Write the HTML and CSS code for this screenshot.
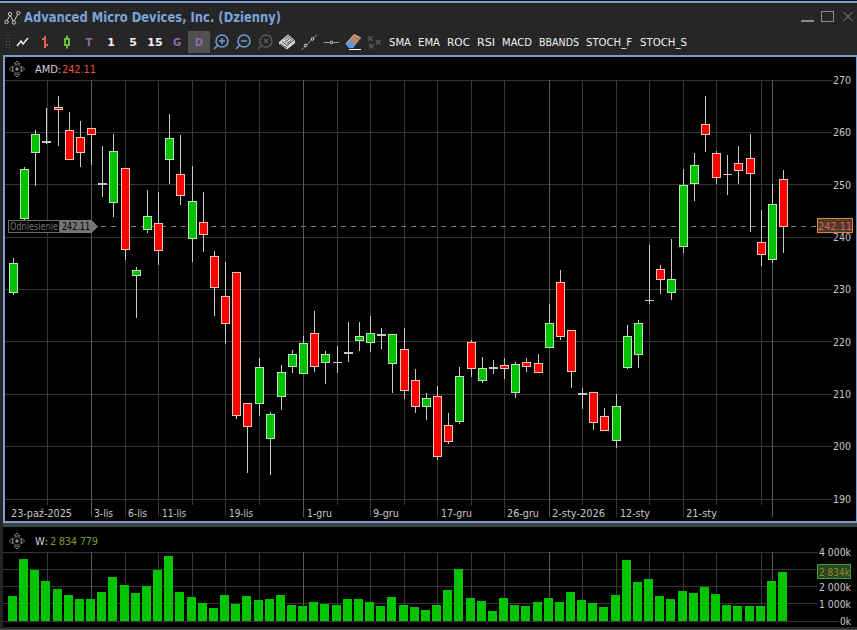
FILE: index.html
```html
<!DOCTYPE html>
<html lang="pl">

<head>
    <meta charset="utf-8">
    <title>Advanced Micro Devices, Inc. (Dzienny)</title>
    <meta name="viewport" content="width=device-width, initial-scale=1">
    <link rel="stylesheet" href="styles.css">
</head>

<body>
    <div class="strip"></div>
    <div class="titlebar">
        <svg class="logo" width="17" height="16" viewBox="0 0 17 16">
            <path d="M3 11 L6 5 L9.500 12 L14 4" />
            <circle cx="2.500" cy="12" r="1.700" />
            <circle cx="6" cy="4" r="1.700" />
            <circle cx="10" cy="12.500" r="1.700" />
            <circle cx="14.300" cy="3" r="1.700" />
        </svg>
        <svg class="title" width="260" height="20"><text x="0" y="14" textLength="257" lengthAdjust="spacingAndGlyphs">Advanced Micro Devices, Inc. (Dzienny)</text></svg>
        <svg class="controls" width="54" height="16" viewBox="0 0 54 16">
            <path class="thick" d="M1 13 H14" />
            <rect x="21.500" y="3.500" width="12" height="10" />
            <path d="M43.500 4 L52.500 13 M52.500 4 L43.500 13" />
        </svg>
    </div>
    <div class="toolbar">
        <div class="grip"></div>
        <div class="tool"><svg viewBox="0 0 22 22"><path class="white" d="M5 15 L9 10 L11 13 L16 7" /></svg></div>
        <div class="tool"><svg viewBox="0 0 22 22"><path class="pink" d="M11 5 V17 M8 8 H11 M11 14 H14" /></svg></div>
        <div class="tool"><svg viewBox="0 0 22 22"><path class="lime" d="M11 4.500 V8 M11 14 V17.500 M9 8 H13 V14 H9 Z" /></svg></div>
        <div class="tool letter purple">T</div>
        <div class="tool letter">1</div>
        <div class="tool letter">5</div>
        <div class="tool letter">15</div>
        <div class="tool letter purple">G</div>
        <div class="tool letter purple active">D</div>
        <div class="tool"><svg viewBox="0 0 22 22"><g class="blue"><circle cx="12" cy="10" r="6" /><path d="M7.500 14.500 L4 18 M9 10 H15 M12 7 V13" /></g></svg></div>
        <div class="tool"><svg viewBox="0 0 22 22"><g class="blue"><circle cx="12" cy="10" r="6" /><path d="M7.500 14.500 L4 18 M9 10 H15" /></g></svg></div>
        <div class="tool"><svg viewBox="0 0 22 22"><g class="off"><circle cx="12" cy="10" r="6" /><path d="M7.500 14.500 L4 18 M10 8 L14 12 M14 8 L10 12" /></g></svg></div>
        <div class="tool"><svg viewBox="0 0 22 22">
            <path d="M3 11 L12 3.500 L19 9.500 L19 12 L11 18.500 L3 13 Z" fill="#d8d8d8" />
            <path d="M8.500 8.500 L12 5.500 L16.500 9 M6 10.500 L11 14.500 L18 9 M9 11 L13 8 M11 12.500 L15 9.500 M4 13 L11 17" stroke="#444" fill="none" />
        </svg></div>
        <div class="tool"><svg viewBox="0 0 22 22"><path d="M3.500 19 L19 3.500" stroke="#8fa3b3" /><g class="knob"><circle cx="7.500" cy="14.500" r="1.300" /><circle cx="14.500" cy="8" r="1.300" /></g></svg></div>
        <div class="tool"><svg viewBox="0 0 22 22"><path d="M3.500 11.500 H19" stroke="#7fa0b8" /><g class="knob"><circle cx="11.500" cy="11.500" r="1.300" /></g></svg></div>
        <div class="tool"><svg viewBox="0 0 22 22">
            <path d="M4 13 L12 3.500 L19 7 L11 17 L7 17 Z" fill="#b98468" />
            <path d="M3.500 13 L7 9 L14 13 L11 17 L7 17 Z" fill="#5d97dc" />
            <path d="M4 13 L12 3.500 L19 7" stroke="#e8b090" fill="none" />
            <path d="M7 18.500 H19" stroke="#fff" />
        </svg></div>
        <div class="tool"><svg viewBox="0 0 22 22"><path class="off" d="M4 5.500 L8.500 10 M8.500 5.500 L4 10 M12 9 L16.500 13.500 M16.500 9 L12 13.500 M5 13 L9.500 17.500 M9.500 13 L5 17.500" /></svg></div>
        <div class="indicators">
            <svg width="310" height="22">
                <text x="3" y="15" textLength="22" lengthAdjust="spacingAndGlyphs">SMA</text>
                <text x="32" y="15" textLength="22" lengthAdjust="spacingAndGlyphs">EMA</text>
                <text x="61" y="15" textLength="23" lengthAdjust="spacingAndGlyphs">ROC</text>
                <text x="91" y="15" textLength="18" lengthAdjust="spacingAndGlyphs">RSI</text>
                <text x="116" y="15" textLength="30" lengthAdjust="spacingAndGlyphs">MACD</text>
                <text x="153" y="15" textLength="40" lengthAdjust="spacingAndGlyphs">BBANDS</text>
                <text x="200" y="15" textLength="46" lengthAdjust="spacingAndGlyphs">STOCH_F</text>
                <text x="254" y="15" textLength="47" lengthAdjust="spacingAndGlyphs">STOCH_S</text>
            </svg>
        </div>
    </div>

    <div class="pane price">
        <div class="legend">
            <svg class="compass" width="16" height="18" viewBox="0 0 16 18">
                <circle class="dot" cx="8" cy="9" r="1.800" />
                <path d="M5 4 L8 1 L11 4 Z M5 14 L8 17 L11 14 Z M3.500 6 L0.500 9 L3.500 12 Z M12.500 6 L15.500 9 L12.500 12 Z" />
                <path class="ring" d="M5 6 Q8 4 11 6 Q13 9 11 12 Q8 14 5 12 Q3 9 5 6" />
            </svg>
            <svg width="120" height="16"><text x="0" y="13" textLength="26">AMD:</text><text class="down" x="27" y="13" textLength="34">242.11</text></svg>
        </div>
        <svg id="candles" width="851" height="444" viewBox="5 77 851 444"></svg>
    </div>

    <div class="pane volume">
        <div class="legend">
            <svg class="compass" width="16" height="18" viewBox="0 0 16 18">
                <circle class="dot" cx="8" cy="9" r="1.800" />
                <path d="M5 4 L8 1 L11 4 Z M5 14 L8 17 L11 14 Z M3.500 6 L0.500 9 L3.500 12 Z M12.500 6 L15.500 9 L12.500 12 Z" />
                <path class="ring" d="M5 6 Q8 4 11 6 Q13 9 11 12 Q8 14 5 12 Q3 9 5 6" />
            </svg>
            <svg width="120" height="16"><text x="0" y="13" textLength="13">W:</text><text class="up" x="15" y="13" textLength="48">2 834 779</text></svg>
        </div>
        <svg id="volume" width="854" height="78" viewBox="3 549 854 78"></svg>
    </div>
    <div class="bottom"></div>
    <script src="chart.js"></script>
</body>

</html>
```
FILE: styles.css
```css
* {
    box-sizing: border-box;
}

body {
    margin: 0;
    width: 857px;
    height: 630px;
    overflow: hidden;
    background-color: #262626;
    font-family: 'DejaVu Sans Condensed', 'DejaVu Sans', sans-serif;
    font-size: 11px;
    color: #e6e6e6;
    display: flex;
    flex-direction: column;
}

svg {
    display: block;
    flex: none;
    fill: none;
}

text {
    fill: #f0f0f0;
}

.strip {
    height: 3px;
    background-color: #0a1430;
    border-bottom: 2px solid #7a9cc8;
}

/* title bar */
.titlebar {
    height: 28px;
    display: flex;
    padding: 4px 3px 0 4px;
}

.logo {
    margin-top: 3px;
    stroke: #c8c8c8;
}

.logo circle {
    fill: #262626;
}

.title {
    margin: 1px 0 0 3px;
}

.title text {
    font-size: 13.5px;
    font-weight: bold;
    fill: #7ba3dc;
}

.controls {
    margin: 1px 0 0 auto;
    stroke: #8c8c8c;
}

.controls .thick {
    stroke-width: 2;
}

/* toolbar */
.toolbar {
    height: 24px;
    display: flex;
    padding-left: 5px;
}

.grip {
    width: 7px;
    height: 16px;
    margin-top: 3px;
    background-image: radial-gradient(#5c5c5c 0.8px, transparent 1px);
    background-size: 3px 3px;
}

.tool {
    width: 22px;
    height: 22px;
}

.letter {
    font-family: 'DejaVu Sans', sans-serif;
    font-weight: bold;
    line-height: 23px;
    text-align: center;
    color: #f0f0f0;
}

.purple {
    font-size: 10px;
    color: #9468a8;
}

.active {
    background-color: #505050;
}

.white {
    stroke: #f0f0f0;
    stroke-width: 1.5;
}

.pink {
    stroke: #e0605c;
    stroke-width: 2;
}

.lime {
    stroke: #6cb83c;
    stroke-width: 2;
}

.blue {
    stroke: #6c9ccc;
    stroke-width: 1.6;
}

.off {
    stroke: #585858;
    stroke-width: 1.5;
}

.knob {
    fill: #262626;
    stroke: #e0e0e0;
}

/* panes */
.pane {
    background-color: #000;
    margin-left: 3px;
    flex: none;
}

.price {
    height: 468px;
    border: 2px solid #7a9cc8;
    border-right-width: 1px;
}

.volume {
    height: 104px;
    border-top: 4px solid #3c4443;
}

.legend {
    height: 20px;
    padding: 3px 0 0 4px;
    display: flex;
}

.volume .legend {
    height: 22px;
    padding: 5px 0 0 6px;
}

.legend text {
    fill: #d0d0d0;
}

.legend .down {
    fill: #e05444;
}

.legend .up {
    fill: #7d9a22;
}

.compass {
    stroke: #7c7c7c;
    margin-right: 10px;
}

.compass .dot {
    fill: #8a8a8a;
    stroke: none;
}

.compass .ring {
    stroke: #484848;
}

.bottom {
    height: 3px;
    background-color: #262626;
    border-bottom: 1px solid #505050;
}

/* chart drawing */
#candles,
#volume {
    overflow: visible;
    shape-rendering: crispEdges;
}

#candles text,
#volume text {
    fill: #c8c8c8;
}

.grid {
    fill: #363636;
}

.grid.month {
    fill: #585858;
}

.wick {
    fill: #c8c8c8;
}

.body {
    stroke: #e8c8b8;
}

.body.g {
    fill: #00c000;
    stroke: #b8e8b8;
}

.body.r {
    fill: #ff0000;
}

.bar {
    fill: #00c400;
}

.dash {
    stroke: #767676;
    stroke-dasharray: 5 5;
}

.ref-box {
    fill: #000;
    stroke: #6a6a6a;
}

.ref-value {
    fill: #747474;
}

#candles .ref-text {
    fill: #747474;
    font-size: 10px;
}

#candles .ref-number {
    fill: #000;
}

.tag-price {
    fill: #50382e;
    stroke: #e08a28;
}

#candles .tag-price-text {
    fill: #d8645c;
}

.tag-volume {
    fill: #2e4422;
    stroke: #2aa82a;
}

#volume .tag-volume-text {
    fill: #8a8c2c;
}
```
FILE: chart.js
```js
const candles = document.getElementById('candles');
const volume = document.getElementById('volume');

// type, open/close top, bottom, high, low
const sessions = [
    ['g', 263, 293, 258, 295], ['g', 169, 219, 167, 220], ['g', 134, 153, 130, 186], ['d', 141, 143, 108, 144],
    ['r', 107, 110, 96, 146], ['r', 130, 160, 112, 160], ['r', 137, 153, 121, 167], ['r', 128, 135, 128, 165],
    ['d', 183, 185, 146, 197], ['g', 151, 203, 134, 217], ['r', 168, 250, 168, 260], ['g', 270, 276, 267, 318],
    ['g', 216, 230, 190, 233], ['r', 223, 251, 192, 265], ['g', 138, 160, 114, 184], ['r', 174, 196, 135, 205],
    ['g', 201, 239, 166, 262], ['r', 222, 235, 192, 252], ['r', 256, 288, 251, 316], ['r', 296, 324, 262, 344],
    ['r', 272, 416, 272, 419], ['r', 403, 427, 403, 473], ['g', 367, 404, 358, 416], ['g', 414, 439, 412, 475],
    ['g', 372, 397, 365, 410], ['g', 354, 367, 350, 373], ['g', 343, 374, 336, 374], ['r', 333, 367, 311, 372],
    ['g', 354, 363, 351, 384], ['d', 362, 363, 346, 373], ['d', 352, 354, 322, 362], ['g', 336, 341, 322, 351],
    ['g', 333, 343, 316, 352], ['d', 334, 336, 328, 349], ['g', 334, 364, 334, 393], ['r', 349, 391, 328, 399],
    ['r', 380, 407, 369, 413], ['g', 398, 407, 393, 420], ['r', 396, 457, 386, 460], ['r', 425, 442, 413, 444],
    ['g', 376, 422, 367, 424], ['r', 342, 369, 340, 377], ['g', 368, 381, 357, 383], ['d', 367, 369, 360, 374],
    ['r', 365, 369, 358, 379], ['g', 364, 393, 362, 398], ['r', 362, 367, 358, 372], ['r', 363, 373, 354, 373],
    ['g', 323, 348, 304, 348], ['r', 282, 337, 270, 340], ['r', 330, 372, 330, 388], ['d', 393, 395, 388, 409],
    ['r', 392, 423, 392, 430], ['r', 416, 431, 408, 431], ['g', 406, 441, 394, 448], ['g', 336, 368, 325, 369],
    ['g', 323, 355, 320, 368], ['d', 300, 301, 245, 304], ['r', 269, 280, 265, 294], ['g', 279, 293, 239, 300],
    ['g', 185, 247, 169, 253], ['g', 165, 184, 153, 201], ['r', 124, 135, 96, 152], ['r', 153, 178, 151, 184],
    ['d', 174, 175, 155, 195], ['r', 163, 171, 146, 184], ['r', 158, 174, 134, 232], ['r', 242, 255, 210, 266],
    ['g', 204, 260, 184, 263], ['r', 179, 227, 170, 253]
];

// top edge of every volume bar
const bars = [
    596, 559, 570, 581, 589, 595, 599, 599, 592, 577, 585, 593, 586, 570, 556, 592, 597, 603, 608, 595, 604, 596, 600,
    599, 595, 605, 606, 602, 604, 605, 599, 599, 602, 606, 597, 605, 607, 610, 605, 590, 569, 598, 601, 611, 598, 605,
    606, 602, 598, 602, 592, 600, 603, 607, 595, 560, 582, 579, 596, 599, 591, 593, 587, 594, 605, 606, 606, 606, 581, 572
];

// x, label, label x, label width
const dates = [
    [47], [91, '3-lis', 94, 19], [125, '6-lis', 128, 19], [158, '11-lis', 162, 24], [192], [225, '19-lis', 229, 24],
    [259], [303, '1-gru', 307, 25], [337], [370, '9-gru', 373, 26], [404], [437, '17-gru', 441, 31], [471],
    [504, '26-gru', 507, 32], [549, '2-sty-2026', 552, 53], [582], [616, '12-sty', 620, 30], [649],
    [683, '21-sty', 686, 31], [716], [761], [772, '', 0, 0]
];
const months = [91, 303, 549, 772];

function add(svg, name, attrs, content) {
    const el = document.createElementNS('http://www.w3.org/2000/svg', name);
    for (const key in attrs) {
        el.setAttribute(key, attrs[key]);
    }
    if (content) {
        el.textContent = content;
    }
    svg.appendChild(el);
}

function rect(svg, cls, x, y, width, height) {
    add(svg, 'rect', { class: cls, x: x, y: y, width: width, height: height });
}

function label(svg, content, x, y, width, cls) {
    add(svg, 'text', { class: cls || 'label', x: x, y: y, textLength: width, lengthAdjust: 'spacingAndGlyphs' }, content);
}

// grid
for (const y of [80, 132, 184, 237, 289, 341, 394, 446, 499]) {
    rect(candles, 'grid', 5, y, 827, 1);
}
for (const y of [552, 569, 586, 603, 621]) {
    rect(volume, 'grid', 3, y, y === 621 ? 836 : 814, 1);
}
for (const [x, name, textX, width] of dates) {
    const cls = months.includes(x) ? 'grid month' : 'grid';
    rect(candles, cls, x, 80, 1, name === undefined ? 425 : 437);
    rect(volume, cls, x, 552, 1, 69);
    if (name) {
        label(candles, name, textX, 517, width);
    }
}
label(candles, '23-paź-2025', 11, 517, 61);

// reference price
add(candles, 'path', { class: 'dash', d: 'M101 226.5 H817' });

sessions.forEach(([type, top, bottom, high, low], i) => {
    const x = Math.round(13 + i * 11.16);
    rect(candles, 'wick', x, high, 1, low - high);
    if (type === 'd') {
        rect(candles, 'wick', x - 4, top, 9, bottom - top);
    } else {
        rect(candles, 'body ' + type, x - 3.5, top + 0.5, 8, bottom - top - 1);
    }
    rect(volume, 'bar', x - 5, bars[i], 9, 621 - bars[i]);
});

rect(candles, 'ref-box', 8.5, 220.5, 51, 12);
add(candles, 'path', { class: 'ref-value', d: 'M60 220 H92 L98 226.500 L92 233 H60 Z' });
label(candles, 'Odniesienie', 10, 230, 48, 'ref-text');
label(candles, '242.11', 62, 230, 28, 'ref-text ref-number');

// price and volume scales
[270, 260, 250, 240, 230, 220, 210, 200, 190].forEach((price, i) => {
    label(candles, String(price), 833, Math.round(84 + i * 52.35), 18);
});
label(volume, '4 000k', 819, 556, 32);
label(volume, '2 000k', 819, 591, 32);
label(volume, '1 000k', 819, 608, 32);
label(volume, '0k', 840, 625, 11);

rect(candles, 'tag-price', 817.5, 218.5, 35, 14);
label(candles, '242.11', 818, 230, 34, 'tag-price-text');
rect(volume, 'tag-volume', 817.5, 564.5, 33, 14);
label(volume, '2 834k', 819, 576, 31, 'tag-volume-text');
```
